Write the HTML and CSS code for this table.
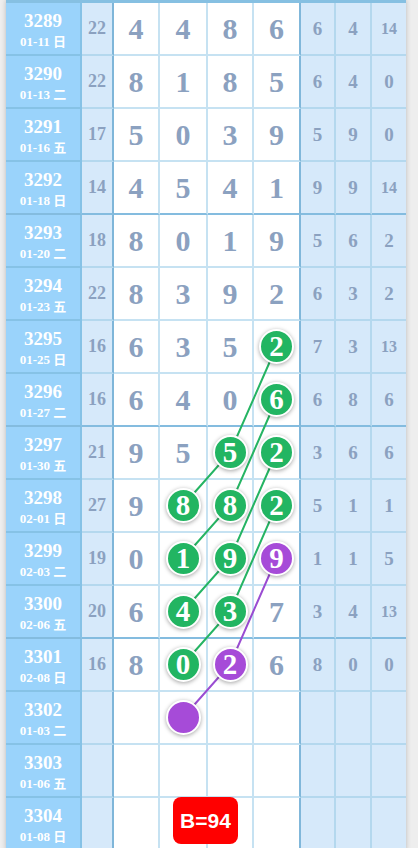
FILE: index.html
```html
<!DOCTYPE html>
<html lang="zh">
<head>
  <meta charset="UTF-8">
  <meta name="viewport" content="width=device-width, initial-scale=1.0">
  <title>走势图</title>
  <link rel="stylesheet" href="styles.css">
</head>
<body>
<div class="board" id="board">
  <svg class="links" id="links"></svg>

  <div class="row">
    <div class="cell issue"><b>3289</b><span>01-11 日</span></div>
    <div class="cell sum">22</div>
    <div class="cell num">4</div><div class="cell num">4</div><div class="cell num">8</div><div class="cell num last">6</div>
    <div class="cell side">6</div><div class="cell side">4</div><div class="cell side small">14</div>
  </div>
  <div class="row">
    <div class="cell issue"><b>3290</b><span>01-13 二</span></div>
    <div class="cell sum">22</div>
    <div class="cell num">8</div><div class="cell num">1</div><div class="cell num">8</div><div class="cell num last">5</div>
    <div class="cell side">6</div><div class="cell side">4</div><div class="cell side">0</div>
  </div>
  <div class="row">
    <div class="cell issue"><b>3291</b><span>01-16 五</span></div>
    <div class="cell sum">17</div>
    <div class="cell num">5</div><div class="cell num">0</div><div class="cell num">3</div><div class="cell num last">9</div>
    <div class="cell side">5</div><div class="cell side">9</div><div class="cell side">0</div>
  </div>
  <div class="row end">
    <div class="cell issue"><b>3292</b><span>01-18 日</span></div>
    <div class="cell sum">14</div>
    <div class="cell num">4</div><div class="cell num">5</div><div class="cell num">4</div><div class="cell num last">1</div>
    <div class="cell side">9</div><div class="cell side">9</div><div class="cell side small">14</div>
  </div>

  <div class="row">
    <div class="cell issue"><b>3293</b><span>01-20 二</span></div>
    <div class="cell sum">18</div>
    <div class="cell num">8</div><div class="cell num">0</div><div class="cell num">1</div><div class="cell num last">9</div>
    <div class="cell side">5</div><div class="cell side">6</div><div class="cell side">2</div>
  </div>
  <div class="row">
    <div class="cell issue"><b>3294</b><span>01-23 五</span></div>
    <div class="cell sum">22</div>
    <div class="cell num">8</div><div class="cell num">3</div><div class="cell num">9</div><div class="cell num last">2</div>
    <div class="cell side">6</div><div class="cell side">3</div><div class="cell side">2</div>
  </div>
  <div class="row">
    <div class="cell issue"><b>3295</b><span>01-25 日</span></div>
    <div class="cell sum">16</div>
    <div class="cell num">6</div><div class="cell num">3</div><div class="cell num">5</div>
    <div class="cell num last"><span class="ball" id="b3295-4">2</span></div>
    <div class="cell side">7</div><div class="cell side">3</div><div class="cell side small">13</div>
  </div>
  <div class="row end">
    <div class="cell issue"><b>3296</b><span>01-27 二</span></div>
    <div class="cell sum">16</div>
    <div class="cell num">6</div><div class="cell num">4</div><div class="cell num">0</div>
    <div class="cell num last"><span class="ball" id="b3296-4">6</span></div>
    <div class="cell side">6</div><div class="cell side">8</div><div class="cell side">6</div>
  </div>

  <div class="row">
    <div class="cell issue"><b>3297</b><span>01-30 五</span></div>
    <div class="cell sum">21</div>
    <div class="cell num">9</div><div class="cell num">5</div>
    <div class="cell num"><span class="ball" id="b3297-3">5</span></div>
    <div class="cell num last"><span class="ball" id="b3297-4">2</span></div>
    <div class="cell side">3</div><div class="cell side">6</div><div class="cell side">6</div>
  </div>
  <div class="row">
    <div class="cell issue"><b>3298</b><span>02-01 日</span></div>
    <div class="cell sum">27</div>
    <div class="cell num">9</div>
    <div class="cell num"><span class="ball" id="b3298-2">8</span></div>
    <div class="cell num"><span class="ball" id="b3298-3">8</span></div>
    <div class="cell num last"><span class="ball" id="b3298-4">2</span></div>
    <div class="cell side">5</div><div class="cell side">1</div><div class="cell side">1</div>
  </div>
  <div class="row">
    <div class="cell issue"><b>3299</b><span>02-03 二</span></div>
    <div class="cell sum">19</div>
    <div class="cell num">0</div>
    <div class="cell num"><span class="ball" id="b3299-2">1</span></div>
    <div class="cell num"><span class="ball" id="b3299-3">9</span></div>
    <div class="cell num last"><span class="ball purple" id="b3299-4">9</span></div>
    <div class="cell side">1</div><div class="cell side">1</div><div class="cell side">5</div>
  </div>
  <div class="row end">
    <div class="cell issue"><b>3300</b><span>02-06 五</span></div>
    <div class="cell sum">20</div>
    <div class="cell num">6</div>
    <div class="cell num"><span class="ball" id="b3300-2">4</span></div>
    <div class="cell num"><span class="ball" id="b3300-3">3</span></div>
    <div class="cell num last">7</div>
    <div class="cell side">3</div><div class="cell side">4</div><div class="cell side small">13</div>
  </div>

  <div class="row">
    <div class="cell issue"><b>3301</b><span>02-08 日</span></div>
    <div class="cell sum">16</div>
    <div class="cell num">8</div>
    <div class="cell num"><span class="ball" id="b3301-2">0</span></div>
    <div class="cell num"><span class="ball purple" id="b3301-3">2</span></div>
    <div class="cell num last">6</div>
    <div class="cell side">8</div><div class="cell side">0</div><div class="cell side">0</div>
  </div>
  <div class="row">
    <div class="cell issue"><b>3302</b><span>01-03 二</span></div>
    <div class="cell sum"></div>
    <div class="cell num"></div>
    <div class="cell num"><span class="ball purple" id="b3302-2"></span></div>
    <div class="cell num"></div>
    <div class="cell num last"></div>
    <div class="cell side"></div><div class="cell side"></div><div class="cell side"></div>
  </div>
  <div class="row">
    <div class="cell issue"><b>3303</b><span>01-06 五</span></div>
    <div class="cell sum"></div>
    <div class="cell num"></div><div class="cell num"></div><div class="cell num"></div><div class="cell num last"></div>
    <div class="cell side"></div><div class="cell side"></div><div class="cell side"></div>
  </div>
  <div class="row end">
    <div class="cell issue"><b>3304</b><span>01-08 日</span></div>
    <div class="cell sum"></div>
    <div class="cell num"></div><div class="cell num"></div><div class="cell num"></div><div class="cell num last"></div>
    <div class="cell side"></div><div class="cell side"></div><div class="cell side"></div>
  </div>

  <div class="badge">B=94</div>
</div>

<script>
  const board = document.getElementById('board');
  const svg = document.getElementById('links');

  // цепочки шаров: колонка 4 -> через ряд колонка 3 -> колонка 2
  const chains = [
    ['3295-4', '3297-3', '3298-2', '#25b463'],
    ['3296-4', '3298-3', '3299-2', '#25b463'],
    ['3297-4', '3299-3', '3300-2', '#25b463'],
    ['3298-4', '3300-3', '3301-2', '#25b463'],
    ['3299-4', '3301-3', '3302-2', '#9a4cd2']
  ];

  const box = board.getBoundingClientRect();

  function center(id) {
    const r = document.getElementById('b' + id).getBoundingClientRect();
    return [
      r.left + r.width / 2 - box.left - board.clientLeft,
      r.top + r.height / 2 - box.top - board.clientTop
    ];
  }

  let html = '';
  chains.forEach((c) => {
    const pts = c.slice(0, 3).map(center).map(p => p.join(',')).join(' ');
    html += '<polyline points="' + pts + '" fill="none" stroke="' + c[3] + '" stroke-width="2"/>';
  });
  svg.innerHTML = html;
</script>
</body>
</html>
```

FILE: styles.css
```css
* {
  margin: 0;
  padding: 0;
  box-sizing: border-box;
}

body {
  background: #eeeeee;
  font-family: 'Liberation Serif', 'Noto Sans CJK SC', serif;
  overflow: hidden;
}

.board {
  position: relative;
  z-index: 0;
  width: 400px;
  margin-left: 6px;
  border-top: 3px solid #86c0e2;
  background: #fff;
  box-shadow: 0 0 5px rgba(0, 0, 0, 0.22);
}

.links {
  position: absolute;
  top: 0;
  left: 0;
  width: 100%;
  height: 100%;
  z-index: 1;
  pointer-events: none;
}

.row {
  display: grid;
  grid-template-columns: 76px 32px 46px 48px 46px 47px 35px 36px 34px;
  height: 53px;
}

.cell {
  display: flex;
  align-items: center;
  justify-content: center;
  border-bottom: 2px solid #c6e2f2;
  border-right: 2px solid #c6e2f2;
  color: #8ba1c0;
  font-weight: bold;
}

.issue {
  flex-direction: column;
  background: #9ad3fb;
  color: #fff;
  border-right: 2px solid #86c2e6;
  border-bottom-color: #86c2e6;
  padding-top: 3px;
}

.issue b {
  font-size: 19px;
  line-height: 20px;
}

.issue span {
  font-size: 13px;
  line-height: 15px;
  margin-top: 3px;
}

.sum {
  background: #d6e9fa;
  font-size: 18px;
  border-right-color: #7fb6d9;
  border-bottom-color: #b4d8ee;
}

.num {
  font-size: 30px;
}

.num.last {
  border-right-color: #80b7da;
}

.side {
  background: #d6e9fa;
  font-size: 19px;
  border-right-color: #b4d8ee;
  border-bottom-color: #b4d8ee;
}

.side:last-child {
  border-right: none;
}

.side.small {
  font-size: 16px;
}

.row.end .cell {
  border-bottom-color: #84bcdf;
}

.ball {
  position: relative;
  z-index: 2;
  display: flex;
  align-items: center;
  justify-content: center;
  width: 35px;
  height: 35px;
  border-radius: 50%;
  border: 2px solid #fff;
  background: #22b562;
  box-shadow: 0 1px 4px rgba(0, 0, 0, 0.35);
  color: #fff;
  font-size: 29px;
  font-weight: bold;
}

.ball.purple {
  background: #a64bd8;
}

.badge {
  position: absolute;
  left: 167px;
  top: 794px;
  z-index: 3;
  width: 65px;
  height: 47px;
  border-radius: 8px;
  background: #ff0000;
  color: #fff;
  font-family: 'Liberation Sans', Arial, sans-serif;
  font-size: 21px;
  font-weight: bold;
  line-height: 47px;
  text-align: center;
}
```
